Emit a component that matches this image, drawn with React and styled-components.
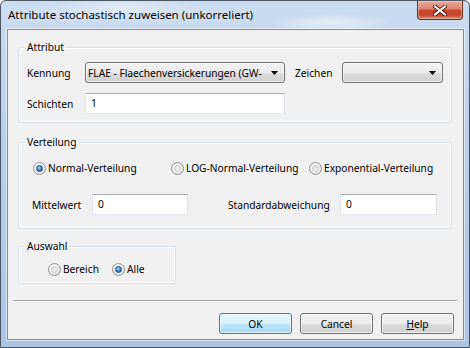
import React from 'react'
import styled, { createGlobalStyle } from 'styled-components'

const GlobalStyle = createGlobalStyle`
  html, body { margin: 0; padding: 0; background: #fff; }
  body { font-family: "Noto Sans", "DejaVu Sans", sans-serif; font-size: 10.2px; color: #000; }
`

const Window = styled.div`
  box-sizing: border-box;
  width: 470px;
  height: 348px;
  display: flex;
  flex-direction: column;
  border: 1px solid #4b5663;
  border-radius: 6px 6px 0 0;
  overflow: hidden;
  background:
    radial-gradient(ellipse 90px 14px at 330px 22px, rgba(255,255,255,0.55), rgba(255,255,255,0) 70%),
    radial-gradient(ellipse 120px 18px at 120px 8px, rgba(255,255,255,0.45), rgba(255,255,255,0) 70%),
    linear-gradient(180deg, #cadcf0 0%, #b9d0ea 40%, #aac5e4 100%);
`

const TitleBar = styled.div`
  height: 28px;
  flex: none;
  display: flex;
  align-items: flex-start;
  padding: 0 6px 0 7px;
`

const Title = styled.div`
  flex: 1;
  padding-top: 6px;
  line-height: 16px;
  font-size: 11.5px;
  color: #000;
  text-shadow: 0 0 8px rgba(255,255,255,0.9);
`

const CloseButton = styled.div`
  width: 46px;
  height: 19px;
  box-sizing: border-box;
  border: 1px solid #6b2a1c;
  border-top: none;
  border-radius: 0 0 4px 4px;
  background: linear-gradient(180deg, #e9a99a 0%, #dd8570 45%, #c7452c 50%, #c84d33 80%, #e08a6f 100%);
  box-shadow: inset 0 0 0 1px rgba(255,255,255,0.35);
  display: flex;
  align-items: center;
  justify-content: center;
`

const Client = styled.div`
  flex: 1;
  margin: 0 5px 7px 6px;
  border: 1px solid #7b8ea3;
  box-shadow: 0 0 0 1px rgba(255,255,255,0.55);
  background: #f0f0f0;
  display: flex;
  flex-direction: column;
`

const Group = styled.fieldset`
  margin: ${p => p.$top}px 11px 0 10px;
  padding: ${p => p.$pt}px 8px ${p => p.$pb}px 8px;
  width: ${p => (p.$width ? `${p.$width}px` : 'auto')};
  box-sizing: border-box;
  min-width: 0;
  border: 1px solid #d5dfe5;
  border-radius: 3px;
  box-shadow: inset 0 0 0 1px rgba(255,255,255,0.8);
  display: flex;
  flex-direction: column;
  gap: ${p => p.$gap || 0}px;
`

const Legend = styled.legend`
  padding: 0 2px;
  margin-left: -2px;
  line-height: 16px;
`

const Row = styled.div`
  display: flex;
  align-items: center;
  height: ${p => p.$h || 21}px;
  padding-left: ${p => p.$pl || 0}px;
`

const Label = styled.span`
  width: ${p => p.$w}px;
  margin-left: ${p => p.$ml || 0}px;
  flex: none;
  white-space: nowrap;
  line-height: 16px;
`

const Combo = styled.div`
  width: ${p => p.$w}px;
  height: 21px;
  box-sizing: border-box;
  flex: none;
  border: 1px solid #707070;
  border-radius: 3px;
  background: linear-gradient(180deg, #f2f2f2 0%, #ebebeb 50%, #dddddd 51%, #cfcfcf 100%);
  box-shadow: inset 0 0 0 1px rgba(255,255,255,0.6);
  display: flex;
  align-items: center;
  gap: 5px;
  padding: 0 6px 0 2px;
`

const ComboText = styled.span`
  flex: 1;
  white-space: nowrap;
  line-height: 16px;
`

const TextBox = styled.div`
  width: ${p => p.$w}px;
  height: 21px;
  box-sizing: border-box;
  flex: none;
  border: 1px solid #abadb3;
  border-color: #abadb3 #dbdfe6 #e3e9ef #e2e3ea;
  background: #fff;
  padding-left: 5px;
  line-height: 19px;
`

const RadioItem = styled.label`
  display: flex;
  align-items: center;
  gap: 2px;
  width: ${p => (p.$w ? `${p.$w}px` : 'auto')};
  flex: none;
  white-space: nowrap;
  line-height: 16px;
`

const RadioMark = styled.span`
  width: 13px;
  height: 13px;
  box-sizing: border-box;
  border-radius: 50%;
  border: 1px solid #8e8f8f;
  background: radial-gradient(circle at 40% 35%, #ffffff 0%, #ececec 60%, #d4d4d4 100%);
  display: flex;
  align-items: center;
  justify-content: center;
  &::after {
    content: '';
    width: 7px;
    height: 7px;
    border-radius: 50%;
    box-sizing: border-box;
    background: ${p =>
      p.$checked
        ? 'radial-gradient(circle at 40% 35%, #bfe4fb 0%, #3d8fd4 45%, #11427a 100%)'
        : 'linear-gradient(135deg, #dcdcdc 0%, #f6f6f6 100%)'};
    border: 1px solid ${p => (p.$checked ? '#1b4a7c' : '#c9c9c9')};
  }
`

const Separator = styled.div`
  margin: 16px 6px 0 5px;
  height: 1px;
  background: #a0a0a0;
  border-bottom: 1px solid #fff;
`

const ButtonBar = styled.div`
  display: flex;
  justify-content: flex-end;
  gap: 8px;
  margin: 11px 9px 0 0;
`

const Button = styled.div`
  width: 73px;
  height: 21px;
  box-sizing: border-box;
  border: 1px solid ${p => (p.$default ? '#3c7fb1' : '#707070')};
  border-radius: 3px;
  background: ${p =>
    p.$default
      ? 'linear-gradient(180deg, #eaf6fd 0%, #d9f0fc 50%, #bee6fd 51%, #a7d9f5 100%)'
      : 'linear-gradient(180deg, #f2f2f2 0%, #ebebeb 50%, #dddddd 51%, #cfcfcf 100%)'};
  box-shadow: inset 0 0 0 1px rgba(255,255,255,0.7);
  display: flex;
  align-items: center;
  justify-content: center;
  line-height: 16px;
`

const Arrow = () => (
  <svg width="7" height="4" viewBox="0 0 7 4">
    <path d="M0 0h7L3.5 4z" fill="#000" />
  </svg>
)

const CloseGlyph = () => (
  <svg width="14" height="11" viewBox="0 0 14 11">
    <path d="M2 1.5l10 8M12 1.5l-10 8" stroke="#4a1a10" strokeWidth="4" strokeLinecap="square" />
    <path d="M2 1.5l10 8M12 1.5l-10 8" stroke="#fff" strokeWidth="2" strokeLinecap="square" />
  </svg>
)

const Radio = ({ checked, width, children }) => (
  <RadioItem $w={width}>
    <RadioMark $checked={checked} />
    {children}
  </RadioItem>
)

const App = () => {
  return (
    <>
      <GlobalStyle />
      <Window>
        <TitleBar>
          <Title>Attribute stochastisch zuweisen (unkorreliert)</Title>
          <CloseButton>
            <CloseGlyph />
          </CloseButton>
        </TitleBar>
        <Client>
          <Group $top={9} $pt={7} $pb={8} $gap={10}>
            <Legend>Attribut</Legend>
            <Row>
              <Label $w={58}>Kennung</Label>
              <Combo $w={200}>
                <ComboText>FLAE - Flaechenversickerungen (GW-</ComboText>
                <Arrow />
              </Combo>
              <Label $w={47} $ml={10}>Zeichen</Label>
              <Combo $w={101}>
                <ComboText />
                <Arrow />
              </Combo>
            </Row>
            <Row>
              <Label $w={58}>Schichten</Label>
              <TextBox $w={200}>1</TextBox>
            </Row>
          </Group>

          <Group $top={11} $pt={10} $pb={13} $gap={18}>
            <Legend>Verteilung</Legend>
            <Row $h={16} $pl={6}>
              <Radio checked width={138}>Normal-Verteilung</Radio>
              <Radio width={138}>LOG-Normal-Verteilung</Radio>
              <Radio>Exponential-Verteilung</Radio>
            </Row>
            <Row $pl={5}>
              <Label $w={60}>Mittelwert</Label>
              <TextBox $w={96}>0</TextBox>
              <Label $w={112} $ml={40}>Standardabweichung</Label>
              <TextBox $w={97}>0</TextBox>
            </Row>
          </Group>

          <Group $top={9} $pt={7} $pb={6} $width={158}>
            <Legend>Auswahl</Legend>
            <Row $h={16} $pl={21}>
              <Radio width={64}>Bereich</Radio>
              <Radio checked>Alle</Radio>
            </Row>
          </Group>

          <Separator />

          <ButtonBar>
            <Button $default>OK</Button>
            <Button>Cancel</Button>
            <Button>
              <span><u>H</u>elp</span>
            </Button>
          </ButtonBar>
        </Client>
      </Window>
    </>
  )
}

export default App
